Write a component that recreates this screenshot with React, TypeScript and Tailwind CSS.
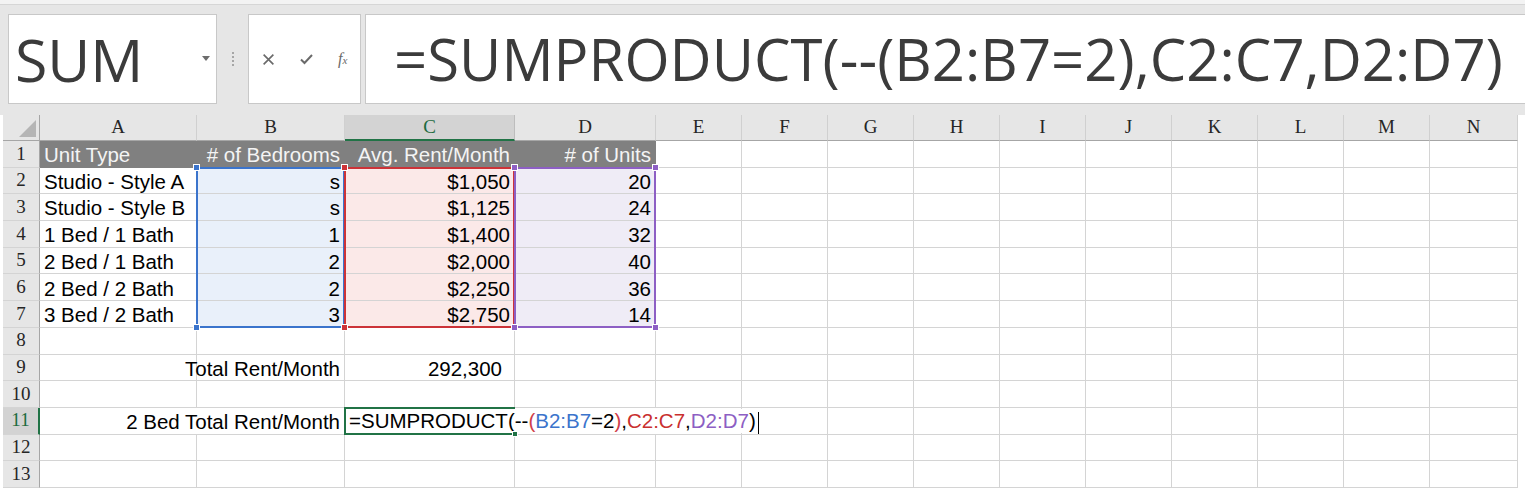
import React from 'react'

type Cell = {
  text?: React.ReactNode
  align?: 'left' | 'right'
  className?: string
  line?: string
  noRight?: boolean
}

const COLS = ['A', 'B', 'C', 'D', 'E', 'F', 'G', 'H', 'I', 'J', 'K', 'L', 'M', 'N']

const units = [
  ['Studio - Style A', 's', '$1,050', '20'],
  ['Studio - Style B', 's', '$1,125', '24'],
  ['1 Bed / 1 Bath', '1', '$1,400', '32'],
  ['2 Bed / 1 Bath', '2', '$2,000', '40'],
  ['2 Bed / 2 Bath', '2', '$2,250', '36'],
  ['3 Bed / 2 Bath', '3', '$2,750', '14'],
]

const fills = ['', 'bg-[#e9f0fa]', 'bg-[#fbe9e8]', 'bg-[#efecf6]']

function cellAt(row: number, col: number): Cell {
  if (row === 1 && col < 4) {
    const labels = ['Unit Type', '# of Bedrooms', 'Avg. Rent/Month', '# of Units']
    return {
      text: labels[col],
      align: col === 0 ? 'left' : 'right',
      className: 'bg-[#808080] text-[#f4f4f4]',
      line: 'border-[#808080]',
    }
  }
  if (row >= 2 && row <= 7 && col < 4) {
    return {
      text: units[row - 2][col],
      align: col === 0 ? 'left' : 'right',
      className: fills[col],
    }
  }
  if (row === 9 && col === 1) return { text: 'Total Rent/Month', align: 'right' }
  if (row === 9 && col === 2) return { text: '292,300', align: 'right', className: 'pr-[12px]' }
  if (row === 11 && col === 0) return { noRight: true }
  if (row === 11 && col === 1) return { text: '2 Bed Total Rent/Month', align: 'right' }
  if (row === 11 && (col === 2 || col === 3)) return { noRight: true }
  return {}
}

function Formula() {
  return (
    <span className="whitespace-nowrap">
      =SUMPRODUCT(--<span className="text-[#cf3e4a]">(</span>
      <span className="text-[#3b74cc]">B2:B7</span>=2<span className="text-[#cf3e4a]">)</span>,
      <span className="text-[#c9302f]">C2:C7</span>,<span className="text-[#8d5fc4]">D2:D7</span>)
      <span className="inline-block w-px h-[22px] bg-black align-middle ml-[2px]" />
    </span>
  )
}

function Handle({ pos, color }: { pos: string; color: string }) {
  return <span className={`absolute w-[7px] h-[7px] border border-white ${pos} ${color}`} />
}

function Range({ col, color, fill }: { col: number; color: string; fill: string }) {
  return (
    <div
      className={`relative pointer-events-none z-10 -ml-px -mt-px border-2 ${color}`}
      style={{ gridRow: '3 / 9', gridColumn: `${col + 2} / ${col + 3}` }}
    >
      <Handle pos="-left-[5px] -top-[5px]" color={fill} />
      <Handle pos="-right-[5px] -top-[5px]" color={fill} />
      <Handle pos="-left-[5px] -bottom-[5px]" color={fill} />
      <Handle pos="-right-[5px] -bottom-[5px]" color={fill} />
    </div>
  )
}

export default function App() {
  const rows = Array.from({ length: 13 }, (_, i) => i + 1)

  return (
    <div className="w-[1525px] h-[497px] bg-white overflow-hidden font-['Liberation_Sans',Arial,sans-serif]">
      {/* formula bar */}
      <div className="h-[115px] bg-[#e6e6e6] border-t-[4px] border-[#f3f3f3]">
        <div className="h-px bg-[#d6d6d6]" />
        <div className="flex pt-[9px] pl-[8px] h-[99px]">
          <div className="w-[209px] h-[90px] bg-white border border-[#c8c8c8] flex items-center pl-[6px] pr-[6px]">
            <span className="flex-1 text-[59px] leading-none text-[#3b3b3b] font-['Open_Sans',sans-serif]">
              SUM
            </span>
            <svg width="8" height="5" viewBox="0 0 8 5" className="mb-[2px]">
              <path d="M0 0h8L4 5z" fill="#6d6d6d" />
            </svg>
          </div>
          <div className="w-[31px] flex flex-col items-center justify-center gap-[2px]">
            {[0, 1, 2, 3].map((i) => (
              <span key={i} className="w-[2px] h-[2px] bg-[#a6a6a6]" />
            ))}
          </div>
          <div className="w-[113px] h-[90px] bg-white border border-[#c8c8c8] flex items-center pl-[13px] gap-[24px]">
            <svg width="13" height="13" viewBox="0 0 12 12">
              <path d="M1.5 1.5l9 9M10.5 1.5l-9 9" stroke="#6a6a6a" strokeWidth="1.5" />
            </svg>
            <svg width="15" height="12" viewBox="0 0 14 12">
              <path d="M1.5 6.5l3.5 3.5L12.5 2" stroke="#6a6a6a" strokeWidth="2" fill="none" />
            </svg>
            <span className="text-[16px] text-[#6a6a6a] italic font-['Liberation_Serif',serif] leading-none">
              f<span className="text-[11px]">x</span>
            </span>
          </div>
          <div className="ml-[4px] flex-1 h-[90px] bg-white border border-[#c8c8c8] border-r-0 flex items-center pl-[28px]">
            <span className="text-[58px] leading-none text-[#3b3b3b] font-['Open_Sans',sans-serif] whitespace-nowrap tracking-[0.05px]">
              =SUMPRODUCT(--(B2:B7=2),C2:C7,D2:D7)
            </span>
          </div>
        </div>
      </div>

      {/* sheet */}
      <div className="pl-[3px]">
        <div className="grid w-max grid-cols-[37px_157px_148px_170px_141px_repeat(9,86px)_88px] grid-rows-[26px_repeat(13,26.7px)] text-[20.5px] text-black">
          {/* corner */}
          <div className="bg-[#e6e6e6] border-r border-b border-[#a6a6a6] flex items-end justify-end p-[3px]" style={{ gridRow: 1, gridColumn: 1 }}>
            <svg width="17" height="17" viewBox="0 0 17 17">
              <path d="M17 0V17H0z" fill="#b5b5b5" />
            </svg>
          </div>

          {/* column headers */}
          {COLS.map((c, i) => (
            <div
              key={c}
              style={{ gridRow: 1, gridColumn: i + 2 }}
              className={`flex items-center justify-center font-['Liberation_Serif',serif] text-[19px] border-r ${
                c === 'C'
                  ? 'bg-[#d3d3d3] text-[#1e6b40] border-b-2 border-b-[#217346] border-r-[#bdbdbd]'
                  : 'bg-[#e6e6e6] text-[#262626] border-b border-b-[#a6a6a6] border-r-[#d0d0d0]'
              }`}
            >
              {c}
            </div>
          ))}

          {/* row headers */}
          {rows.map((r) => (
            <div
              key={`h${r}`}
              style={{ gridRow: r + 1, gridColumn: 1 }}
              className={`flex items-center justify-center font-['Liberation_Serif',serif] text-[19px] border-b border-b-[#d4d4d4] ${
                r === 11
                  ? 'bg-[#d3d3d3] text-[#1e6b40] border-r-2 border-r-[#217346]'
                  : 'bg-[#e6e6e6] text-[#262626] border-r border-r-[#a6a6a6]'
              }`}
            >
              {r}
            </div>
          ))}

          {/* cells */}
          {rows.map((r) =>
            COLS.map((_, c) => {
              const cell = cellAt(r, c)
              return (
                <div
                  key={`${r}-${c}`}
                  style={{ gridRow: r + 1, gridColumn: c + 2 }}
                  className={`flex items-center whitespace-nowrap leading-none pt-[3px] px-[4px] border-b ${
                    cell.line ?? 'border-[#d4d4d4]'
                  } ${cell.noRight ? '' : 'border-r'} ${
                    cell.align === 'right' ? 'justify-end' : 'justify-start'
                  } ${cell.className ?? ''}`}
                >
                  {cell.text}
                </div>
              )
            })
          )}

          {/* reference ranges */}
          <Range col={1} color="border-[#3b74cc]" fill="bg-[#3b74cc]" />
          <Range col={2} color="border-[#cc3338]" fill="bg-[#cc3338]" />
          <Range col={3} color="border-[#8d5fc4]" fill="bg-[#8d5fc4]" />

          {/* active cell in edit mode */}
          <div
            className="relative z-20 -ml-px -mt-px border-t-2 border-l-2 border-b-2 border-[#217346]"
            style={{ gridRow: 12, gridColumn: 4 }}
          >
            <div className="absolute left-0 top-0 bottom-0 flex items-center pt-[3px] pl-[3px] pr-[2px] bg-white leading-none">
              <Formula />
            </div>
            <span className="absolute -right-[3px] -bottom-[4px] w-[6px] h-[6px] bg-[#217346] border border-white" />
          </div>
        </div>
      </div>
    </div>
  )
}
